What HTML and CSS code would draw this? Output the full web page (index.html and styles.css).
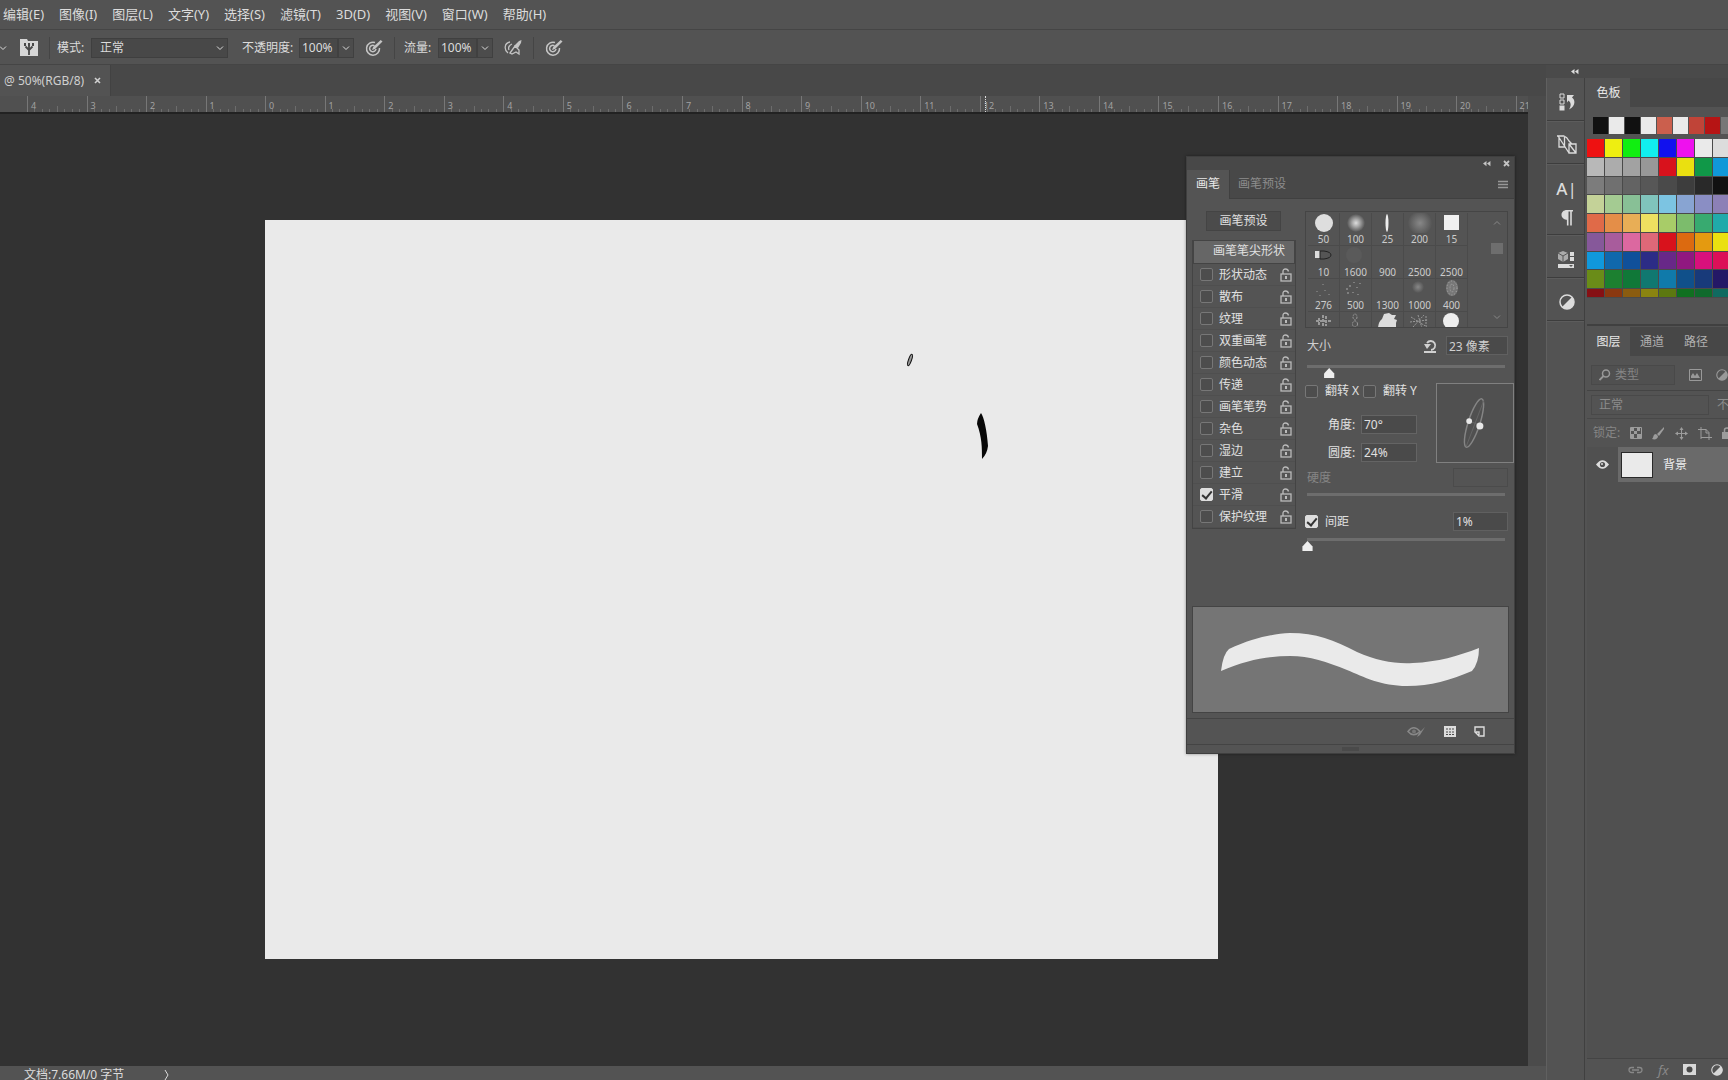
FILE: index.html
```html
<!DOCTYPE html>
<html lang="zh-CN">
<head>
<meta charset="utf-8">
<title>图像编辑器</title>
<link rel="stylesheet" href="styles.css">
</head>
<body>
<svg class="defs" aria-hidden="true">
  <symbol id="chev" viewBox="0 0 10 10"><path d="M2 3.5 5 6.5 8 3.5" fill="none" stroke="currentColor"/></symbol>
  <symbol id="lock" viewBox="0 0 12 14"><path d="M3 6V3.5Q3 1 5.5 1T8.500 3.500" fill="none" stroke="currentColor" stroke-width="1.300"/><rect x="1" y="6" width="10" height="7" fill="none" stroke="currentColor" stroke-width="1.300"/><path d="M5 8h2v3H5z" fill="currentColor"/></symbol>
  <symbol id="half" viewBox="0 0 16 16"><circle cx="8" cy="8" r="7" fill="none" stroke="currentColor" stroke-width="1.500"/><path d="M13 3A7 7 0 0 1 3 13z" fill="currentColor"/></symbol>
  <symbol id="pressure" viewBox="0 0 18 18"><path d="M10 3.500A6.500 6.500 0 1 0 14.500 9M9.500 6.800A3.200 3.200 0 1 0 11 10" fill="none" stroke="currentColor" stroke-width="1.500"/><path d="m7 11 1.200-3 7.500-7 1.800 1.500-7.500 7.500z" fill="currentColor"/></symbol>
  <symbol id="collapse" viewBox="0 0 10 8"><path d="M5 1v6L1 4zM9.500 1v6l-4-3z" fill="currentColor"/></symbol>
</svg>
<div class="app">
  <nav class="menu" aria-label="主菜单">
    <button>编辑(E)</button><button>图像(I)</button><button>图层(L)</button><button>文字(Y)</button><button>选择(S)</button><button>滤镜(T)</button><button>3D(D)</button><button>视图(V)</button><button>窗口(W)</button><button>帮助(H)</button>
  </nav>
  <div class="options">
    <svg class="i10" ><use href="#chev"/></svg>
    <button class="ic brushtoggle" aria-label="切换画笔面板"><svg width="18" height="20" viewBox="0 0 18 20"><path d="M0 1h7l1 2h10v15H0z" fill="#d6d6d6"/><path d="M9 17v-6M9 12 5.500 8.500M9 12l3.500-3.500M9 12V8" stroke="#484848" stroke-width="1.800" fill="none"/><path d="M4 5h2v3H4zM8 5h2v3H8zM12 5h2v3h-2z" fill="#484848"/></svg></button>
    <span class="sep"></span>
    <label class="mode-label" for="mode">模式:</label>
    <span class="selwrap mode"><select id="mode"><option>正常</option></select><svg class="i10"><use href="#chev"/></svg></span>
    <label class="opacity-label" for="op">不透明度:</label>
    <span class="combo"><input id="op" value="100%"><button aria-label="不透明度滑块"><svg class="i10"><use href="#chev"/></svg></button></span>
    <button class="ic press" aria-label="不透明度压力"><svg width="18" height="18"><use href="#pressure"/></svg></button>
    <span class="sep"></span>
    <label class="flow-label" for="fl">流量:</label>
    <span class="combo"><input id="fl" value="100%"><button aria-label="流量滑块"><svg class="i10"><use href="#chev"/></svg></button></span>
    <button class="ic air" aria-label="喷枪"><svg width="18" height="18" viewBox="0 0 18 18"><path d="M6 3C0 4 0 11 4 14M8 5C5 6 4 9 5 11" fill="none" stroke="currentColor" stroke-width="1.300"/><path d="m6 14 5-7 4 4v4l-3-2-4 2z" fill="none" stroke="currentColor" stroke-width="1.300"/><path d="m10 7 5-5 2.500-1-.5 3-3 5z" fill="currentColor"/></svg></button>
    <span class="sep"></span>
    <button class="ic size-press" aria-label="大小压力"><svg width="18" height="18"><use href="#pressure"/></svg></button>
  </div>
  <div class="main">
    <section class="docs">
      <div class="doctabs"><button class="doctab">@ 50%(RGB/8)<svg width="7" height="7" viewBox="0 0 7 7"><path d="m1 1 5 5M6 1 1 6" stroke="currentColor" stroke-width="1.600"/></svg></button></div>
      <div class="view">
        <div class="stage">
          <div class="ruler" id="ruler"></div>
          <div class="workspace">
            <div class="artboard">
              <svg width="953" height="739" viewBox="0 0 953 739"><path d="M716 193Q712 199 712 204C717 217 717 228 717 239Q722 234 723 226C722 211 719 197 716 193z" fill="#080808"/><ellipse cx="645" cy="140" rx="1.500" ry="6" transform="rotate(20 645 140)" fill="#999" stroke="#111"/></svg>
            </div>
          </div>
        </div>
        <div class="vscroll"></div>
      </div>
      <footer class="status"><span>文档:7.66M/0 字节</span><svg width="8" height="12" viewBox="0 0 8 12"><path d="m2 1 3 5-3 5" fill="none" stroke="currentColor"/></svg></footer>
    </section>
    <aside class="dock">
      <div class="dockhead"><svg width="9" height="7"><use href="#collapse"/></svg></div>
      <div class="dockcols">
      <div class="iconcol">
        <div class="grp one"><button aria-label="历史记录"><svg width="16" height="18" viewBox="0 0 16 18"><path d="M1 1h4v4H1zM1 7h4v4H1z" fill="none" stroke="currentColor"/><path d="M.5 12.500h5v5h-5zM8 2h7l-2 2.500c4 3 3 9-3 12 2.500-4 2-7-.5-9L8 9.500z" fill="currentColor"/></svg></button></div>
        <div class="grp one"><button aria-label="画笔预设"><svg width="20" height="20" viewBox="0 0 20 20"><path d="M0 1h7q3 1 5 5l3 3M1 1l11 17M2 2v10h5.500V2M12 9h7v9h-7zM12 9l7 9" fill="none" stroke="currentColor" stroke-width="1.300"/></svg></button></div>
        <div class="grp two"><button aria-label="字符"><span class="glyph"><b>A</b>|</span></button><button aria-label="段落"><svg width="12" height="16" viewBox="0 0 12 16"><path d="M5 0h7v1.500H5zM7 0v10C-1.500 10-1.500 0 6 0z" fill="currentColor"/><path d="M6.700 0v15.500M10 0v15.500" stroke="currentColor" stroke-width="1.600"/></svg></button></div>
        <div class="grp one"><button aria-label="库"><svg width="17" height="17" viewBox="0 0 17 17"><path d="m5 0 5 2v6l-5 3-5-3V2z" fill="#aaa"/><path d="m0 2 5 3 5-3M5 5v6" stroke="#555" fill="none"/><path d="M12 1h4v4h-4zM12 6h4v4h-4zM0 13h16v4H0z" fill="currentColor"/><path d="M11 14h4l-2 2z" fill="#555"/></svg></button></div>
        <div class="grp one"><button aria-label="调整"><svg width="16" height="16"><use href="#half"/></svg></button></div>
      </div>
      <div class="panels">
        <section class="swatchpanel">
          <div class="ptabs"><button class="on">色板</button></div>
          <div class="recent" id="recent"></div>
          <div class="swatches" id="swatches"></div>
        </section>
        <section class="layers">
          <div class="ptabs"><button class="on">图层</button><button>通道</button><button>路径</button></div>
          <div class="filter"><label class="search"><svg width="12" height="12" viewBox="0 0 12 12"><circle cx="7" cy="4.500" r="3.500" fill="none" stroke="currentColor" stroke-width="1.500"/><path d="m4.500 7-4 4" stroke="currentColor" stroke-width="1.800"/></svg><input value="类型" aria-label="图层过滤"></label><button aria-label="像素图层"><svg width="13" height="12" viewBox="0 0 13 12"><path d="M.5.5h12v11H.5z" fill="none" stroke="currentColor"/><path d="M2 9V7l2-3 2 3 2-3 3 5z" fill="currentColor"/></svg></button><button aria-label="调整图层"><svg width="12" height="12"><use href="#half"/></svg></button></div>
          <div class="blend"><select aria-label="混合模式"><option>正常</option></select><span>不透明度:</span></div>
          <div class="locks"><span>锁定:</span>
            <button aria-label="锁定透明"><svg width="12" height="12" viewBox="0 0 12 12"><path d="M.5.5h11v11H.5z" fill="none" stroke="currentColor"/><path d="M1 1h3v3H1zM7 1h3v3H7zM4 4h3v3H4zM1 7h3v4H1zM7 7h4v4H7z" fill="currentColor"/></svg></button>
            <button aria-label="锁定像素"><svg width="13" height="13" viewBox="0 0 13 13"><path d="M12 0 5 7l2 2 5-7zM4 7c-3 0-2 3-4 5 3 1 6 0 6-3z" fill="currentColor"/></svg></button>
            <button aria-label="锁定位置"><svg width="13" height="13" viewBox="0 0 13 13"><path d="M6.500 1v11M1 6.500h11" stroke="currentColor"/><path d="m6.500 0 2 3h-4zM6.500 13l-2-3h4zM0 6.500l3-2v4zM13 6.500l-3 2v-4z" fill="currentColor"/></svg></button>
            <button aria-label="锁定画板"><svg width="14" height="13" viewBox="0 0 14 13"><path d="M3 0v12M0 2.500h8l3 3V13M3 10.500h11M8 2v4h3" fill="none" stroke="currentColor"/></svg></button>
            <button aria-label="锁定全部"><svg width="10" height="12" viewBox="0 0 10 12"><path d="M2.500 5V3q0-2 2.500-2t2.500 2v2" fill="none" stroke="currentColor" stroke-width="1.500"/><path d="M0 5h10v7H0z" fill="currentColor"/></svg></button>
          </div>
          <div class="layer"><button class="eye" aria-label="可见性"><svg width="13" height="9" viewBox="0 0 13 9"><path d="M0 4.500Q6.500-4 13 4.500 6.500 13 0 4.500z" fill="#ddd"/><circle cx="6.500" cy="4.500" r="2.600" fill="#505050"/><circle cx="6" cy="4" r="1" fill="#ddd"/></svg></button><div class="row"><span class="thumb"></span><span>背景</span></div></div>
          <div class="fill"></div>
          <div class="layerfoot">
            <button class="dim" aria-label="链接"><svg width="15" height="8" viewBox="0 0 15 8"><path d="M6 1.500H3.500a2.500 2.500 0 0 0 0 5H6M9 1.500h2.500a2.500 2.500 0 0 1 0 5H9M4 4h7" fill="none" stroke="currentColor" stroke-width="1.300"/></svg></button>
            <button class="dim fx">fx</button>
            <button aria-label="蒙版"><svg width="13" height="11" viewBox="0 0 13 11"><path d="M0 0h13v11H0z" fill="currentColor"/><circle cx="6.500" cy="5.500" r="3" fill="#484848"/></svg></button>
            <button aria-label="调整"><svg width="12" height="12"><use href="#half"/></svg></button>
          </div>
        </section>
      </div>
      </div>
    </aside>
  </div>
</div>

<section class="brush" aria-label="画笔面板">
  <div class="bhead"><svg width="9" height="7"><use href="#collapse"/></svg><svg width="7" height="7" viewBox="0 0 7 7"><path d="m1 1 5 5M6 1 1 6" stroke="currentColor" stroke-width="1.800"/></svg></div>
  <div class="btabs"><button class="on">画笔</button><button>画笔预设</button><svg width="10" height="9" viewBox="0 0 10 9"><path d="M0 1.500h10M0 4.500h10M0 7.500h10" stroke="currentColor" stroke-width="1.500"/></svg></div>
  <div class="bbody">
    <div class="left">
      <button class="preset">画笔预设</button>
      <div class="list">
        <button class="tip">画笔笔尖形状</button>
        <div class="opt"><input type="checkbox" id="o1"><label for="o1">形状动态</label><svg><use href="#lock"/></svg></div>
        <div class="opt"><input type="checkbox" id="o2"><label for="o2">散布</label><svg><use href="#lock"/></svg></div>
        <div class="opt"><input type="checkbox" id="o3"><label for="o3">纹理</label><svg><use href="#lock"/></svg></div>
        <div class="opt"><input type="checkbox" id="o4"><label for="o4">双重画笔</label><svg><use href="#lock"/></svg></div>
        <div class="opt"><input type="checkbox" id="o5"><label for="o5">颜色动态</label><svg><use href="#lock"/></svg></div>
        <div class="opt"><input type="checkbox" id="o6"><label for="o6">传递</label><svg><use href="#lock"/></svg></div>
        <div class="opt"><input type="checkbox" id="o7"><label for="o7">画笔笔势</label><svg><use href="#lock"/></svg></div>
        <div class="opt"><input type="checkbox" id="o8"><label for="o8">杂色</label><svg><use href="#lock"/></svg></div>
        <div class="opt"><input type="checkbox" id="o9"><label for="o9">湿边</label><svg><use href="#lock"/></svg></div>
        <div class="opt"><input type="checkbox" id="o10"><label for="o10">建立</label><svg><use href="#lock"/></svg></div>
        <div class="opt"><input type="checkbox" id="o11" checked><label for="o11">平滑</label><svg><use href="#lock"/></svg></div>
        <div class="opt"><input type="checkbox" id="o12"><label for="o12">保护纹理</label><svg><use href="#lock"/></svg></div>
      </div>
    </div>
    <div class="right">
      <div class="tips">
        <div class="tipgrid">
          <button><svg viewBox="0 0 28 20"><circle cx="14" cy="10" r="9" fill="#dedede"/></svg>50</button>
          <button><svg viewBox="0 0 28 20"><defs><radialGradient id="g1"><stop offset="0" stop-color="#ddd"/><stop offset=".4" stop-color="#aaa"/><stop offset="1" stop-color="#555"/></radialGradient><radialGradient id="g2"><stop offset="0" stop-color="#888"/><stop offset="1" stop-color="#555"/></radialGradient></defs><circle cx="14" cy="10" r="9" fill="url(#g1)"/></svg>100</button>
          <button><svg viewBox="0 0 28 20"><ellipse cx="13" cy="10" rx="1.500" ry="9" fill="#eee"/></svg>25</button>
          <button><svg viewBox="0 0 28 20"><circle cx="14" cy="10" r="12" fill="url(#g2)"/></svg>200</button>
          <button><svg viewBox="0 0 28 20"><path d="M6 2h15v15H6z" fill="#f0f0f0"/></svg>15</button>
          <button><svg viewBox="0 0 28 20"><path d="M5 5h5v7H5z" fill="#ddd"/><path d="M10 5h4q7 1 7 4t-7 4h-4z" fill="#555" stroke="#222"/></svg>10</button>
          <button><svg viewBox="0 0 28 20"><circle cx="12" cy="9" r="8" fill="#5a5a5a"/></svg>1600</button>
          <button><svg viewBox="0 0 28 20"></svg>900</button>
          <button><svg viewBox="0 0 28 20"></svg>2500</button>
          <button><svg viewBox="0 0 28 20"></svg>2500</button>
          <button><svg viewBox="0 0 28 20"><path d="M13 5v1M7 12v1M15 11v1M19 15v1M10 16v1" stroke="#999"/></svg>276</button>
          <button><svg viewBox="0 0 28 20"><path d="M8 6v2M12 3v1M5 9v2M15 8v1M11 13v1M6 13v2M18 4v1M16 15v1" stroke="#aaa"/></svg>500</button>
          <button><svg viewBox="0 0 28 20"></svg>1300</button>
          <button><svg viewBox="0 0 28 20"><circle cx="12" cy="8" r="6" fill="url(#g2)"/></svg>1000</button>
          <button><svg viewBox="0 0 28 20"><ellipse cx="14" cy="9" rx="6" ry="8" fill="#777"/><ellipse cx="14" cy="9" rx="5" ry="7" fill="none" stroke="#aaa" stroke-dasharray="1 2"/><ellipse cx="14" cy="9" rx="2" ry="4" fill="none" stroke="#999" stroke-dasharray="2 1"/></svg>400</button>
          <button><svg viewBox="0 0 28 20"><path d="M6 9h15M9 6v7M13 3v12M16 4v10" stroke="#999" stroke-width="2" stroke-dasharray="3 1"/></svg></button>
          <button><svg viewBox="0 0 28 20"><ellipse cx="13" cy="5" rx="2" ry="3" fill="none" stroke="#999" stroke-dasharray="2 1"/><ellipse cx="13" cy="12" rx="2.500" ry="3" fill="none" stroke="#999" stroke-dasharray="2 1"/></svg></button>
          <button><svg viewBox="0 0 28 20"><path d="m10 2 5-1 3 2 4 0-2 4 3 1-1 3v6H4q0-7 4-10z" fill="#ddd"/></svg></button>
          <button><svg viewBox="0 0 28 20"><path d="m5 5 16 10M4 10l18-2M7 15 18 3M12 3l4 13M20 4v10" stroke="#999" stroke-dasharray="2 1"/></svg></button>
          <button><svg viewBox="0 0 28 20"><circle cx="13" cy="9" r="8" fill="#eee"/></svg></button>
        </div>
        <div class="tipscroll"><svg class="up"><use href="#chev"/></svg><i></i><svg><use href="#chev"/></svg></div>
      </div>
      <div class="line size"><label for="size">大小</label><svg width="14" height="14" viewBox="0 0 14 14"><path d="M4 4a4.500 4.500 0 1 1 4 7M1 13h12" fill="none" stroke="currentColor" stroke-width="1.800"/><path d="M1 5h7L4 10z" fill="currentColor"/></svg><input id="size" value="23 像素"></div>
      <input class="range" type="range" aria-label="大小" min="0" max="100" value="11">
      <div class="shape">
        <div>
          <div class="flip"><input type="checkbox" id="fx"><label for="fx">翻转 X</label><input type="checkbox" id="fy"><label for="fy">翻转 Y</label></div>
          <div class="num"><label for="ang">角度:</label><input id="ang" value="70°"></div>
          <div class="num"><label for="rnd">圆度:</label><input id="rnd" value="24%"></div>
        </div>
        <svg class="dial" viewBox="0 0 78 80"><ellipse cx="38" cy="40" rx="6" ry="26" transform="rotate(18 38 40)" fill="none" stroke="#858585" stroke-width="1.500"/><path d="M32 38 45 42M30 64 48 17" stroke="#666"/><circle cx="33" cy="38" r="3" fill="#e8e8e8"/><circle cx="44" cy="43" r="3.600" fill="#e8e8e8"/></svg>
      </div>
      <div class="line dis"><label for="hard">硬度</label><input id="hard" disabled></div>
      <input class="range nothumb" type="range" aria-label="硬度" disabled>
      <div class="line space"><input type="checkbox" id="sp" checked><label for="sp">间距</label><input aria-label="间距值" value="1%"></div>
      <input class="range" type="range" aria-label="间距" min="0" max="100" value="0">
    </div>
  </div>
  <div class="preview"><svg width="315" height="105" viewBox="1 0 315 105"><path d="M29 64Q31 47 37 42C61 31 80 27 98 26 124 26 142 33 165 45 185 54 203 57 221 56 246 55 266 49 287 41Q287 56 280 64C258 73 239 79 215 79 189 79 172 70 155 63 135 55 118 49 98 49 76 49 54 53 29 64z" fill="#eaeaea"/></svg></div>
  <div class="bfoot">
    <svg width="19" height="12" viewBox="0 0 19 12"><path d="M1 5.500Q6.500-2 13 5.500 6.500 12 1 5.500z" fill="none" stroke="#888" stroke-width="1.500"/><circle cx="7" cy="5.500" r="2" fill="#777"/><path d="m18 1-5 8-3 2 2-4z" fill="#888"/></svg>
    <svg width="12" height="11" viewBox="0 0 12 11"><path d="M0 0h12v11H0z" fill="#ddd"/><path d="M2 3h8M2 6h8M2 8.500h8" stroke="#4a4a4a" stroke-dasharray="2 1"/></svg>
    <svg width="11" height="11" viewBox="0 0 11 11"><path d="M1 5V1h9v9H6M1 6l4 4V6z" fill="none" stroke="#ddd" stroke-width="1.400"/></svg>
  </div>
  <div class="grip"><i></i></div>
</section>
<script src="app.js"></script>
</body>
</html>
```
FILE: styles.css
```css
* { box-sizing: border-box; }
html, body { height: 100%; }
body { margin: 0; overflow: hidden; background: #535353; color: #dcdcdc; font: 12px/16px "Noto Sans", "Noto Sans CJK SC", sans-serif; position: relative; }
button, input, select { font: inherit; color: inherit; margin: 0; padding: 0; border: 0; background: none; border-radius: 0; }
button { white-space: nowrap; }
svg { display: block; flex: none; }
.defs { position: absolute; width: 0; height: 0; }
.i10 { width: 10px; height: 10px; }
.app { height: 100vh; display: flex; flex-direction: column; }
.menu { height: 29px; flex: none; display: flex; align-items: center; gap: 15px; padding: 0 0 2px 3px; font-size: 13px; }
.options { height: 36px; flex: none; display: flex; align-items: center; border-top: 1px solid #454545; border-bottom: 1px solid #454545; padding-top: 2px; }
.options > .i10 { margin-left: -2px; }
.ic { display: grid; place-items: center; width: 18px; height: 20px; color: #c4c4c4; }
.brushtoggle { margin-left: 12px; }
.sep { width: 1px; height: 22px; background: #454545; margin-left: 11px; }
.mode-label { margin-left: 7px; width: 34px; }
.flow-label { margin-left: 9px; width: 34px; }
.opacity-label { margin-left: 14px; width: 57px; }
.selwrap { display: flex; align-items: center; width: 137px; height: 20px; background: #484848; border: 1px solid #3f3f3f; }
.selwrap select { flex: 1; appearance: none; padding-left: 8px; outline: 0; }
.selwrap .i10 { margin-right: 2px; }
.combo { display: flex; height: 20px; }
.combo input { width: 39px; background: #484848; border: 1px solid #404040; padding-left: 2px; }
.combo button { width: 16px; background: #4c4c4c; border: 1px solid #404040; display: grid; place-items: center; }
.press, .air, .size-press { margin-left: 11px; }
.main { flex: 1; min-height: 0; display: flex; }
.docs { flex: 1; min-width: 0; display: flex; flex-direction: column; }
.doctabs { height: 31px; flex: none; background: #484848; display: flex; }
.doctab { width: 111px; background: #535353; display: flex; align-items: center; gap: 10px; padding-left: 4px; border-right: 1px solid #424242; color: #d0d0d0; }
.view { flex: 1; min-height: 0; display: flex; }
.stage { flex: 1; min-width: 0; display: flex; flex-direction: column; }
.vscroll { width: 18px; background: #4b4b4b; }
.ruler { height: 18px; flex: none; display: flex; overflow: hidden; background: #505050; border-bottom: 2px solid #222; color: #a2a2a2; font-size: 9px; line-height: 10px; }
.span { display: flex; flex: none; }
.unit { flex: 1; border-left: 1px solid #777; padding: 5px 0 0 3px; position: relative; }
.unit:empty { border: 0; }
.ticks { position: absolute; left: 0; bottom: 0; width: 100%; height: 6px; display: flex; align-items: flex-end; }
.ticks i { flex: 1; height: 3px; border-right: 1px solid #6c6c6c; }
.ticks i:nth-child(4n) { height: 6px; }
.ticks i:last-child { border: 0; }
.pointer::after { content: ""; position: absolute; left: 4px; top: 0; height: 16px; border-left: 1px dotted #ddd; }
.workspace { flex: 1; min-height: 0; position: relative; overflow: hidden; background: #323232; }
.artboard { position: absolute; left: 265px; top: 106px; width: 953px; height: 739px; background: #eaeaea; }
.status { height: 14px; flex: none; display: flex; gap: 39px; padding-left: 24px; background: #535353; overflow: hidden; line-height: 18px; }
.status svg { margin-top: 3px; }
.dock { width: 182px; flex: none; display: flex; flex-direction: column; background: #535353; }
.dockhead { height: 13px; flex: none; background: #4a4a4a; padding: 3px 0 0 24px; }
.dockcols { flex: 1; min-height: 0; display: flex; }
.iconcol { width: 39px; border-right: 1px solid #404040; border-left: 1px solid #606060; }
.grp { border-bottom: 1px solid #3d3d3d; display: flex; flex-direction: column; justify-content: center; align-items: center; height: 43px; padding: 6px 0 0 2px; box-shadow: 0 1px #5c5c5c; }
.grp.two { height: 71px; gap: 11px; }
.glyph { font: 17px/19px "Noto Sans", sans-serif; }
.glyph b { font-weight: 500; }
.panels { flex: 1; min-width: 0; margin-left: 2px; display: flex; flex-direction: column; overflow: hidden; }
.ptabs { height: 29px; background: #474747; display: flex; color: #b0b0b0; }
.ptabs button { width: 44px; }
.ptabs .on { background: #535353; width: 43px; color: #e8e8e8; }
.swatchpanel { height: 248px; flex: none; border-bottom: 2px solid #404040; }
.recent { display: flex; margin: 10px 0 5px 6px; gap: 1px; height: 17px; overflow: hidden; }
.recent button { width: 15px; flex: none; border: 0; }
.swatches { height: 159px; display: grid; grid-template-columns: repeat(8, 18px); grid-template-rows: repeat(8, 1fr) 9px; overflow: hidden; background: #505050; }
.swatches button { border: solid #4a4a4a; border-width: 0 1px 1px 0; }
.layers { flex: 1; min-height: 0; display: flex; flex-direction: column; color: #999; padding-top: 1px; white-space: nowrap; }
.filter { height: 35px; display: flex; align-items: center; padding: 3px 0 0 4px; gap: 14px; border-bottom: 1px solid #444; }
.search { display: flex; align-items: center; gap: 4px; width: 92px; height: 20px; border: 1px solid #494949; padding-left: 7px; background: #505050; }
.search input { width: 50px; color: #858585; }
.blend { height: 28px; display: flex; align-items: center; gap: 8px; padding-left: 4px; border-bottom: 1px solid #484848; color: #8c8c8c; }
.blend select { appearance: none; width: 118px; flex: none; height: 20px; padding-left: 7px; border: 1px solid #494949; opacity: 1; }
.locks { height: 28px; display: flex; align-items: center; gap: 10px; padding-left: 6px; color: #9c9c9c; }
.locks span { color: #858585; }
.locks button { flex: none; }
.layer { height: 35px; display: flex; }
.eye { width: 31px; display: grid; place-items: center; background: #505050; }
.row { flex: 1; background: #6a6a6a; display: flex; align-items: center; gap: 10px; padding-left: 3px; color: #eee; }
.thumb { width: 32px; height: 26px; background: #eaeaea; border: 1px solid #292929; flex: none; }
.fill { flex: 1; background: #505050; }
.layerfoot { height: 22px; border-top: 1px solid #444; display: flex; align-items: center; padding: 0 0 0 41px; gap: 15px; color: #d8d8d8; }
.layerfoot button { flex: none; }
.layerfoot .dim { color: #888; }
.fx { font-style: italic; font-size: 13px; line-height: 14px; }

.brush { position: absolute; right: 213px; top: 156px; width: 329px; background: #545454; border: 1px solid #3f3f3f; box-shadow: 0 0 3px rgba(0,0,0,.4); }
.bhead { height: 13px; background: #484848; display: flex; justify-content: flex-end; align-items: center; gap: 12px; padding-right: 4px; color: #c4c4c4; }
.btabs { height: 29px; background: #484848; border-bottom: 1px solid #404040; display: flex; align-items: center; color: #8c8c8c; }
.btabs button { height: 29px; padding: 0 8px; }
.btabs .on { background: #545454; color: #e8e8e8; border-right: 1px solid #404040; width: 43px; }
.btabs svg { margin-left: auto; margin-right: 6px; color: #989898; }
.bbody { display: flex; height: 407px; padding: 12px 5px 0 5px; gap: 9px; color: #e0e0e0; }
.left { width: 104px; }
.preset { display: block; width: 75px; height: 20px; margin: 0 0 9px 14px; background: #4b4b4b; border: 1px solid #444; }
.list { border: 1px solid #444; border-top: 0; height: 289px; }
.tip { width: 100%; height: 24px; background: #666; border: 1px solid #444; padding: 0 0 2px 10px; display: block; }
.opt { height: 22px; display: flex; align-items: center; gap: 6px; padding: 0 3px 0 7px; border-bottom: 1px solid #4f4f4f; }
.opt label { flex: 1; }
.opt svg { width: 12px; height: 14px; color: #bbb; }
.brush input[type=checkbox] { appearance: none; width: 13px; height: 13px; flex: none; border: 1px solid #777; border-radius: 2px; background: #4d4d4d; display: grid; place-items: center; }
.brush input[type=checkbox]:checked { background: #ddd; border-color: #ddd; }
.brush input[type=checkbox]:checked::after { content: ""; width: 4px; height: 8px; border: solid #333; border-width: 0 2px 2px 0; transform: translateY(-1px) rotate(40deg); }
.right { flex: 1; min-width: 0; }
.tips { height: 117px; width: 203px; border: 1px solid #454545; display: flex; overflow: hidden; padding-top: 1px; }
.tipgrid { display: grid; grid-template-columns: repeat(5, 32px); grid-auto-rows: 33px; flex: 1; padding-left: 2px; font-size: 10px; color: #ccc; }
.tipgrid button { border: solid #4b4b4b; border-width: 0 1px 1px 0; display: flex; flex-direction: column; align-items: center; line-height: 12px; }
.tipgrid svg { width: 28px; height: 20px; }
.tipscroll { width: 18px; margin-right: 1px; display: flex; flex-direction: column; align-items: center; padding: 5px 0; color: #888; }
.tipscroll svg { width: 10px; height: 10px; }
.tipscroll .up { transform: rotate(180deg); }
.tipscroll i { width: 12px; height: 11px; background: #6e6e6e; margin: 15px 0 auto; }
.line { display: flex; align-items: center; height: 19px; width: 203px; padding-left: 2px; }
.line label { margin-right: auto; }
.line > input:not([type=checkbox]) { width: 55px; height: 19px; background: #4a4a4a; border: 1px solid #606060; padding-left: 2px; }
.size { margin-top: 8px; color: #d0d0d0; }
.size > svg { margin-right: 9px; }
.size > #size { width: 62px; }
.range { appearance: none; display: block; width: 214px; height: 26px; margin-left: -6px; outline: 0; position: relative; }
.range::-webkit-slider-runnable-track { height: 26px; background: linear-gradient(#6d6d6d, #6d6d6d) 8px 10px / 198px 3px no-repeat; }
.range::-webkit-slider-thumb { appearance: none; width: 17px; height: 10px; margin-top: 13px; background: #eee; clip-path: polygon(50% 0, 80% 55%, 80% 100%, 20% 100%, 20% 55%); }
.nothumb::-webkit-slider-thumb { opacity: 0; }
.shape { display: flex; justify-content: space-between; margin-top: 2px; width: 209px; }
.flip { display: flex; align-items: center; height: 16px; width: 128px; }
.flip label { width: 38px; margin-left: 7px; flex: none; white-space: nowrap; }
.num { display: flex; align-items: center; margin-top: 16px; height: 19px; padding-left: 23px; }
.num + .num { margin-top: 9px; }
.num label { width: 33px; }
.num input { width: 56px; height: 19px; background: #4a4a4a; border: 1px solid #646464; padding-left: 2px; }
.dial { width: 78px; height: 80px; border: 1px solid #808080; background: #505050; }
.dis { color: #858585; margin-top: 5px; }
.line > #hard { background: none; border-color: #4b4b4b; }
.nothumb { margin-top: -2px; height: 22px; }
.space { margin-top: 5px; padding-left: 0; gap: 7px; }
.space + .range { margin-top: -3px; }
.preview { margin: 0 5px; height: 107px; background: #757575; border: 1px solid #444; }
.bfoot { height: 27px; margin-top: 5px; border-top: 1px solid #444; border-bottom: 1px solid #444; display: flex; align-items: center; justify-content: flex-end; gap: 18px; padding-right: 29px; }
.grip { height: 8px; display: grid; place-items: center; }
.grip i { width: 17px; height: 4px; background: #4a4a4a; }
```
FILE: app.js
```js
// Fills the ruler and the colour swatches from data.
const ruler = document.getElementById('ruler');
function addSpan(width, labels) {
  const span = document.createElement('div');
  span.className = 'span';
  span.style.width = width + 'px';
  labels.forEach(text => {
    const unit = document.createElement('div');
    unit.className = 'unit' + (text === 12 ? ' pointer' : '');
    unit.textContent = text;
    if (text !== '') {
      const ticks = document.createElement('div');
      ticks.className = 'ticks';
      for (let i = 0; i < 8; i++) ticks.append(document.createElement('i'));
      unit.append(ticks);
    }
    span.append(unit);
  });
  ruler.append(span);
}
const range = (a, b) => Array.from({ length: b - a }, (_, i) => a + i);
addSpan(27, ['']);
addSpan(238, [4, 3, 2, 1]);
addSpan(953, range(0, 16));
addSpan(357, range(16, 22));

function addSwatches(id, colours) {
  const box = document.getElementById(id);
  colours.split(' ').forEach(c => {
    const b = document.createElement('button');
    b.style.background = '#' + c;
    b.setAttribute('aria-label', '#' + c);
    box.append(b);
  });
}
addSwatches('recent', '111 eaeaea 111 eaeaea cb5f4d eaeaea c04438 b61414 777');
addSwatches('swatches', [
  'ee1111 eeee11 11ee11 11eeee 1111ee ee11ee eaeaea dcdcdc',
  'b8b8b8 acacac a2a2a2 989898 d8121c eae010 109848 1098d8',
  '7c7c7c 707070 636363 575757 4a4a4a 3d3d3d 292929 111111',
  'c4d298 a4cb92 88c096 80c4bc 7cc4e2 88a4d2 8a8ec4 8c80b6',
  'e06a48 e48e48 e8ae56 eee060 a8cc68 7cbc6c 38aa70 20aaaa',
  '86589a a85c9c dc68a0 de6878 d8121c dc6a10 e49a10 eae010',
  '1098dc 1068ac 10509a 2c2c86 682888 901880 d8107c dc1058',
  '6a8c18 1c8030 107838 107870 107aaa 10508a 183a7a 241866',
  '861014 8a3810 8a5c10 8a8410 5c7810 107020 106a2c 106a60'
].join(' '));
```
